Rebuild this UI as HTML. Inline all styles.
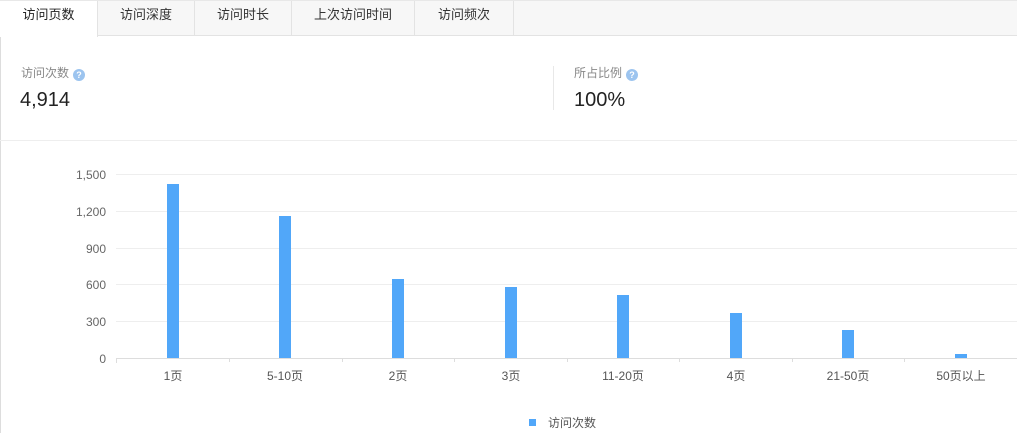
<!DOCTYPE html>
<html><head><meta charset="utf-8"><style>
*{margin:0;padding:0;box-sizing:border-box}
body{width:1017px;height:433px;background:#fff;font-family:"Liberation Sans","Noto Sans CJK SC",sans-serif;position:relative;overflow:hidden}
.tabs{position:absolute;left:0;top:0;width:1017px;height:36px;background:#f7f7f7;border-bottom:1px solid #e3e3e3;border-top:1px solid #e8e8e8}
.tab{position:absolute;top:0;height:35px;line-height:28px;font-size:13px;color:#333;text-align:center;border-right:1px solid #e3e3e3}
.tab.a{background:#fff;height:36px;color:#222}
.lbl{position:absolute;font-size:12px;color:#888}
.q{display:inline-block;width:12px;height:12px;border-radius:50%;background:#9cc4ef;color:#fff;font-size:9px;line-height:12px;text-align:center;vertical-align:-1px;margin-left:4px;font-weight:bold}
.num{position:absolute;font-size:20px;color:#222}
.t{position:absolute;font-size:12px;color:#666}
</style></head><body>
<div style="position:absolute;left:0;top:36px;width:1px;height:397px;background:#ddd"></div>
<div class="tabs">
<div class="tab a" style="left:0;width:98px">访问页数</div>
<div class="tab" style="left:98px;width:97px">访问深度</div>
<div class="tab" style="left:195px;width:97px">访问时长</div>
<div class="tab" style="left:292px;width:123px">上次访问时间</div>
<div class="tab" style="left:415px;width:99px">访问频次</div>
</div>
<div class="lbl" style="left:21px;top:64px">访问次数<span class="q">?</span></div>
<div class="num" style="left:20px;top:89px">4,914</div>
<div style="position:absolute;left:553px;top:66px;width:1px;height:44px;background:#e8e8e8"></div>
<div class="lbl" style="left:574px;top:64px">所占比例<span class="q">?</span></div>
<div class="num" style="left:574px;top:89px">100%</div>
<div style="position:absolute;left:0;top:140px;width:1017px;height:1px;background:#eee"></div>
<svg style="position:absolute;left:0;top:0" width="1017" height="433">
<g stroke="#eee" stroke-width="1">
<line x1="116" x2="1017" y1="174.5" y2="174.5"/><line x1="116" x2="1017" y1="211.5" y2="211.5"/><line x1="116" x2="1017" y1="248.5" y2="248.5"/><line x1="116" x2="1017" y1="284.5" y2="284.5"/><line x1="116" x2="1017" y1="321.5" y2="321.5"/>
</g>
<line x1="116" x2="1017" y1="358.5" y2="358.5" stroke="#ddd"/>
<g stroke="#ddd"><line x1="116.5" x2="116.5" y1="358" y2="363"/><line x1="229.5" x2="229.5" y1="358" y2="362"/><line x1="342.5" x2="342.5" y1="358" y2="362"/><line x1="454.5" x2="454.5" y1="358" y2="362"/><line x1="567.5" x2="567.5" y1="358" y2="362"/><line x1="679.5" x2="679.5" y1="358" y2="362"/><line x1="792.5" x2="792.5" y1="358" y2="362"/><line x1="904.5" x2="904.5" y1="358" y2="362"/></g>
<g fill="#51a7f9">
<rect x="167" y="184" width="12" height="174"/><rect x="279" y="216" width="12" height="142"/><rect x="392" y="279" width="12" height="79"/><rect x="505" y="287" width="12" height="71"/><rect x="617" y="295" width="12" height="63"/><rect x="730" y="313" width="12" height="45"/><rect x="842" y="330" width="12" height="28"/><rect x="955" y="354" width="12" height="4"/>
<rect x="529" y="419" width="7" height="7"/>
</g>
<g font-size="12" fill="#666" text-anchor="end" font-family="Liberation Sans,sans-serif">
<text x="106" y="179">1,500</text><text x="106" y="216">1,200</text><text x="106" y="253">900</text><text x="106" y="289">600</text><text x="106" y="326">300</text><text x="106" y="363">0</text>
</g>
<g font-size="12" fill="#555" text-anchor="middle" font-family="Liberation Sans,Noto Sans CJK SC,sans-serif">
<text x="173" y="380">1页</text><text x="285" y="380">5-10页</text><text x="398" y="380">2页</text><text x="511" y="380">3页</text><text x="623" y="380">11-20页</text><text x="736" y="380">4页</text><text x="848" y="380">21-50页</text><text x="961" y="380">50页以上</text>
</g>
<text x="548" y="427" font-size="12" fill="#555" font-family="Liberation Sans,Noto Sans CJK SC,sans-serif">访问次数</text>
</svg>
</body></html>
